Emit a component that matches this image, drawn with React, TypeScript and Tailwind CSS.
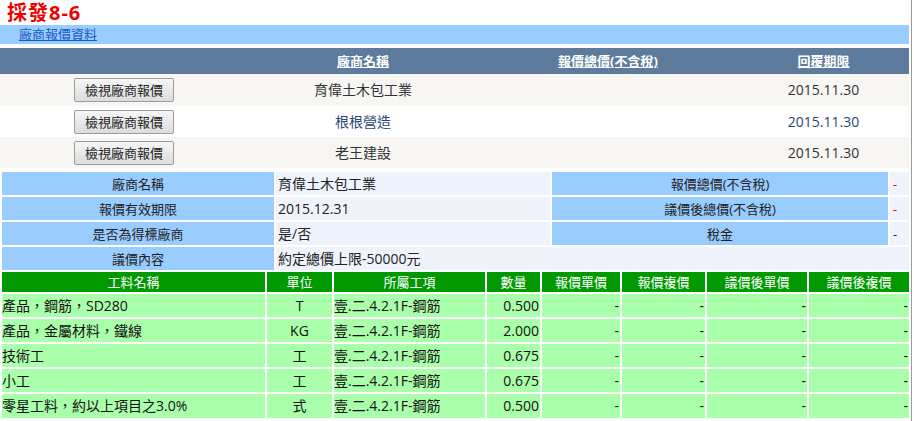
import React from "react";

const FONT = { fontFamily: '"Open Sans","Noto Sans CJK TC",sans-serif' };

const vendors = [
  { name: "育偉土木包工業", date: "2015.11.30", alt: false, h: "h-[32px]" },
  { name: "根根營造", date: "2015.11.30", alt: true, h: "h-[31px]" },
  { name: "老王建設", date: "2015.11.30", alt: false, h: "h-[31px]" },
];

const items = [
  { name: "產品，鋼筋，SD280", unit: "T", item: "壹.二.4.2.1F-鋼筋", qty: "0.500" },
  { name: "產品，金屬材料，鐵線", unit: "KG", item: "壹.二.4.2.1F-鋼筋", qty: "2.000" },
  { name: "技術工", unit: "工", item: "壹.二.4.2.1F-鋼筋", qty: "0.675" },
  { name: "小工", unit: "工", item: "壹.二.4.2.1F-鋼筋", qty: "0.675" },
  { name: "零星工料，約以上項目之3.0%", unit: "式", item: "壹.二.4.2.1F-鋼筋", qty: "0.500" },
];

export default function App() {
  return (
    <div className="w-[914px] h-[421px] bg-white overflow-hidden" style={FONT}>
      <div className="w-[912px] h-[421px] border-r border-[#9a9a9a]">
        <div className="h-[25px] pl-[7px] pt-[2px]">
          <span className="block text-[20px] leading-[22px] font-bold tracking-[1px] text-[#ee0000]">
            採發8-6
          </span>
        </div>
        <div className="w-[909px] h-[19px] bg-[#99ccff] pl-[19px] text-[13px] leading-[19px]">
          <a className="underline text-[#1a5cc7] cursor-pointer">廠商報價資料</a>
        </div>
        <div className="h-[4px]" />
        <table className="w-[909px] table-fixed border-collapse text-[14px] leading-[16px]">
          <colgroup>
            <col className="w-[248px]" />
            <col className="w-[230px]" />
            <col className="w-[260px]" />
            <col className="w-[171px]" />
          </colgroup>
          <thead>
            <tr className="h-[26px] bg-[#5d7b9d] text-white font-bold text-[13px]">
              <th className="p-0"></th>
              <th className="p-0 text-center font-bold"><a className="underline">廠商名稱</a></th>
              <th className="p-0 text-center font-bold"><a className="underline">報價總價(不含稅)</a></th>
              <th className="p-0 text-center font-bold"><a className="underline">回覆期限</a></th>
            </tr>
          </thead>
          <tbody>
            {vendors.map((v) => (
              <tr
                key={v.name}
                className={`${v.h} ${v.alt ? "bg-white text-[#284775]" : "bg-[#f7f6f3] text-[#333333]"}`}
              >
                <td className="p-0 text-center">
                  <button className="w-[100px] h-[24px] text-[13px] leading-[16px] text-[#222] border border-[#9c9c9c] rounded-[2px] bg-gradient-to-b from-[#f6f6f6] to-[#dcdcdc]">
                    檢視廠商報價
                  </button>
                </td>
                <td className="p-0 text-center">{v.name}</td>
                <td className="p-0"></td>
                <td className="p-0 text-center">{v.date}</td>
              </tr>
            ))}
          </tbody>
        </table>
        <div className="h-[2px]" />
        <table className="w-[911px] table-fixed border-separate border-spacing-0.5 text-[13px] leading-[16px] text-[#222]">
          <colgroup>
            <col className="w-[272px]" />
            <col className="w-[274px]" />
            <col className="w-[336px]" />
            <col className="w-[19px]" />
          </colgroup>
          <tbody>
            <tr className="h-[23px]">
              <td className="p-0 bg-[#99ccff] text-center">廠商名稱</td>
              <td className="p-0 pl-[2px] bg-[#eef3fc] text-[14px]">育偉土木包工業</td>
              <td className="p-0 bg-[#99ccff] text-center">報價總價(不含稅)</td>
              <td className="p-0 pl-[3px] bg-[#eef3fc] text-[#ee0000]">-</td>
            </tr>
            <tr className="h-[23px]">
              <td className="p-0 bg-[#99ccff] text-center">報價有效期限</td>
              <td className="p-0 pl-[2px] bg-[#eef3fc] text-[14px]">2015.12.31</td>
              <td className="p-0 bg-[#99ccff] text-center">議價後總價(不含稅)</td>
              <td className="p-0 pl-[3px] bg-[#eef3fc] text-[#ee0000]">-</td>
            </tr>
            <tr className="h-[23px]">
              <td className="p-0 bg-[#99ccff] text-center">是否為得標廠商</td>
              <td className="p-0 pl-[2px] bg-[#eef3fc] text-[14px]">是/否</td>
              <td className="p-0 bg-[#99ccff] text-center">稅金</td>
              <td className="p-0 pl-[3px] bg-[#eef3fc]">-</td>
            </tr>
            <tr className="h-[23px]">
              <td className="p-0 bg-[#99ccff] text-center">議價內容</td>
              <td colSpan={3} className="p-0 pl-[2px] bg-[#eef3fc] text-[14px]">約定總價上限-50000元</td>
            </tr>
          </tbody>
        </table>
        <table className="-mt-[2px] w-[911px] table-fixed border-separate border-spacing-0.5 text-[13px] leading-[16px] text-[#111]">
          <colgroup>
            <col className="w-[263px]" />
            <col className="w-[65px]" />
            <col className="w-[151px]" />
            <col className="w-[53px]" />
            <col className="w-[78px]" />
            <col className="w-[83px]" />
            <col className="w-[100px]" />
            <col className="w-[100px]" />
          </colgroup>
          <thead>
            <tr className="h-[20px] bg-[#009900] text-white">
              <th className="p-0 font-normal text-center">工料名稱</th>
              <th className="p-0 font-normal text-center">單位</th>
              <th className="p-0 font-normal text-center">所屬工項</th>
              <th className="p-0 font-normal text-center">數量</th>
              <th className="p-0 font-normal text-center">報價單價</th>
              <th className="p-0 font-normal text-center">報價複價</th>
              <th className="p-0 font-normal text-center">議價後單價</th>
              <th className="p-0 font-normal text-center">議價後複價</th>
            </tr>
          </thead>
          <tbody>
            {items.map((it, i) => (
              <tr key={it.name} className={`${i === 4 ? "h-[24px]" : "h-[23px]"} bg-[#aaffaa] text-[14px]`}>
                <td className="p-0 bg-[#aaffaa]">{it.name}</td>
                <td className="p-0 bg-[#aaffaa] text-center">{it.unit}</td>
                <td className="p-0 bg-[#aaffaa]">{it.item}</td>
                <td className="p-0 pr-[1px] bg-[#aaffaa] text-right">{it.qty}</td>
                <td className="p-0 pr-[1px] bg-[#aaffaa] text-right">-</td>
                <td className="p-0 pr-[1px] bg-[#aaffaa] text-right">-</td>
                <td className="p-0 pr-[1px] bg-[#aaffaa] text-right">-</td>
                <td className="p-0 pr-[1px] bg-[#aaffaa] text-right">-</td>
              </tr>
            ))}
          </tbody>
        </table>
      </div>
    </div>
  );
}
